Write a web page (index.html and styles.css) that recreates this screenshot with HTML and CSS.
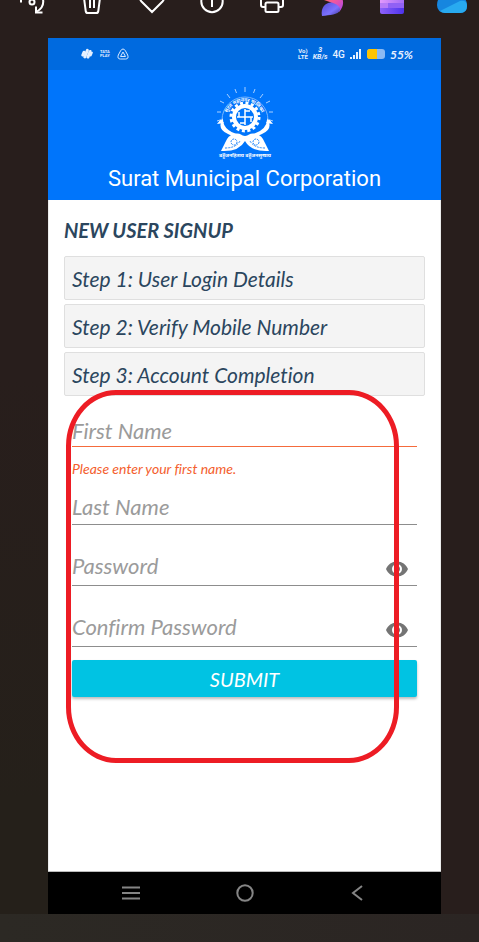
FILE: index.html
```
<!DOCTYPE html>
<html lang="en">
<head>
<meta charset="utf-8">
<meta name="viewport" content="width=device-width, initial-scale=1">
<title>Surat Municipal Corporation</title>
<link rel="stylesheet" href="styles.css">
</head>
<body>
<div class="viewer">
  <nav class="toolbar" aria-label="Image tools">
    <button class="tool" type="button" aria-label="Rotate"><svg width="32" height="32" viewBox="0 0 32 32"><path d="M5 10v8.500M26 12q4 10-5 15.500"/><circle cx="16" cy="18" r="2.500"/><path d="M20 22.500V28.500h6.500"/></svg></button>
    <button class="tool" type="button" aria-label="Delete"><svg width="32" height="32" viewBox="0 0 32 32"><path d="M6 10h20M7.500 10l2.200 17q.3 2 2 2h8.600q1.700 0 2-2l2.200-17M14 14v10M18 14v10"/></svg></button>
    <button class="tool" type="button" aria-label="Favourite"><svg width="32" height="32" viewBox="0 0 32 32"><path d="M16 28L5.500 17.500C0 11 9 5 16 12c7-7 16-1 10.500 5.500z"/></svg></button>
    <button class="tool" type="button" aria-label="Info"><svg width="32" height="32" viewBox="0 0 32 32"><circle cx="16" cy="17.500" r="10.700"/><path d="M16 15v8M16 11v1"/></svg></button>
    <button class="tool" type="button" aria-label="Print"><svg width="32" height="32" viewBox="0 0 32 32"><path d="M9 23H7q-2 0-2-2v-9h22v9q0 2-2 2h-2"/><rect x="9.500" y="18.500" width="13" height="9.500" rx="1.500"/></svg></button>
    <button class="tool" type="button" aria-label="Designer"><svg class="filled" width="32" height="32" viewBox="0 0 32 32"><defs><linearGradient id="pink" x2="1" y2="1"><stop stop-color="#ff7b55"/><stop offset=".5" stop-color="#f2579c"/><stop offset="1" stop-color="#a344f5"/></linearGradient><linearGradient id="violet" x2="1" y2="1"><stop stop-color="#554bd4"/><stop offset=".6" stop-color="#7c72ff"/><stop offset="1" stop-color="#3f3794"/></linearGradient></defs><path fill="url(#pink)" d="M8 12q8-8 17 0 5 8-2 16-2-9-15-12z"/><path fill="url(#violet)" d="M6 32c-2-10 6-15 11-13 3 1 8 4 7 7-2 5-10 5-18 6z"/></svg></button>
    <button class="tool" type="button" aria-label="Clipchamp"><svg class="filled" width="32" height="32" viewBox="0 0 32 32"><defs><linearGradient id="film" x2="1"><stop stop-color="#e299fc"/><stop offset="1" stop-color="#a26bf5"/></linearGradient><linearGradient id="base" x2="1"><stop stop-color="#8f62fa"/><stop offset="1" stop-color="#4d33ec"/></linearGradient></defs><path fill="url(#film)" d="M4 6h24v13H4z"/><path fill="#b77bf7" d="M4 19h8v6H4z"/><path fill="#9061f5" d="M12 19h16v6H12z"/><path fill="url(#base)" d="M4 24h24v4q0 2-2 2H6q-2 0-2-2z"/></svg></button>
    <button class="tool" type="button" aria-label="OneDrive"><svg class="filled" width="32" height="32" viewBox="0 0 32 32"><path fill="#1686df" d="M9 29q-8-1-8-8 0-9 9-9l13 2q8-1 8 7 0 8-7 8z"/><path fill="#28aaf0" d="m4 27 20-10q7-1 7 5 0 7-7 7H9q-3 0-5-2z"/></svg></button>
  </nav>

  <main class="phone">
    <div class="status">
      <div class="status-group left">
        <svg width="12" height="12" viewBox="0 0 12 12"><g fill="#e7f1ff" transform="rotate(22 6 6)"><rect x="1" y="4" width="3" height="6" rx="1.500"/><rect x="3.500" y="1" width="3" height="10" rx="1.500"/><rect x="6.500" y="1" width="3" height="9" rx="1.500"/><rect x="9" y="2" width="2" height="5" rx="1"/></g></svg>
        <span class="stack tiny">TATA<br>PLAY</span>
        <svg width="12" height="12" viewBox="0 0 12 12" fill="none" stroke="#d5e7ff"><path d="M6 1Q7.500 1 8.500 3l2.200 4q1.300 4-2 4H3.300q-3.300 0-2-4l2.200-4Q4.500 1 6 1z"/><path d="M6 4 3.500 8.500h5z"/></svg>
      </div>
      <div class="status-group">
        <span class="stack small">Vo)<br>LTE</span>
        <span class="stack speed">3<br>KB/s</span>
        <span class="network">4G</span>
        <svg width="12" height="12" viewBox="0 0 12 12" fill="#e7f1ff"><path d="M0 9h2v2H0zM3 7h2v4H3zM6 4h2v7H6zM9 1h2v10H9z"/></svg>
        <svg width="18" height="10" viewBox="0 0 18 10"><rect width="18" height="10" rx="3" fill="#8ab9f3"/><path d="M10 0H3Q0 0 0 3v4q0 3 3 3h7z" fill="#ffc400"/></svg>
        <span class="percent">55%</span>
      </div>
    </div>

    <header class="brand">
      <svg class="emblem" width="58" height="74" viewBox="0 0 58 74" role="img" aria-label="Surat Municipal Corporation emblem">
        <defs><path id="arc" d="M10 34a18.500 18.500 0 0 1 37 0"/></defs>
        <g stroke="#a9d0ff" stroke-width="1"><path d="M29 1v5M19 3l1.500 4M39 3l-1.500 4M11 8l3 4M47 8l-3 4M4 15l4 2M54 15l-4 2M1 26h4M57 26h-4M1 35l3-1M57 35l-3-1"/></g>
        <path d="M6 34a23 23 0 0 1 46 0" fill="none" stroke="#79b6ff" stroke-width="1"/>
        <circle cx="29" cy="31" r="14" fill="none" stroke="#fff" stroke-width="3" stroke-dasharray="3 2.500"/>
        <circle cx="29" cy="31" r="11" fill="none" stroke="#fff" stroke-width="4"/>
        <path d="M29 23v16M21 31h16M29 25h5M35 31v5M29 37h-5M23 31v-5" fill="none" stroke="#fff" stroke-width="1.500"/>
        <text class="arc-text"><textPath href="#arc" startOffset="50%" text-anchor="middle">सुरत महानगर पालिका</textPath></text>
        <path d="M7 32q-1 14 22 18Q52 46 51 32q7 11-5 16-7 4-17 5-10-1-17-5Q0 43 7 32z" fill="#fff"/>
        <path d="M8 37 1 38l4-5M50 37l7 1-4-5" fill="#fff"/>
        <path d="M29 53q-4-7-11-5-6 1-9 9l-4 8q18 1 24-10 6 11 24 10l-4-8q-3-8-9-9-7-2-11 5z" fill="#fff"/>
        <g fill="none" stroke="#2588fa" stroke-width="1" stroke-dasharray="2 1"><ellipse cx="18" cy="56" rx="3" ry="3"/><ellipse cx="40" cy="56" rx="3" ry="3"/><path d="M9 62q11 0 15-7M49 62q-11 0-15-7"/></g>
        <text class="motto" x="29" y="71" text-anchor="middle">बहुजनहिताय बहुजनसुखाय</text>
      </svg>
      <div class="brand-name">Surat Municipal Corporation</div>
    </header>

    <section class="content">
      <h1>NEW USER SIGNUP</h1>
      <ol class="steps">
        <li>Step 1: User Login Details</li>
        <li>Step 2: Verify Mobile Number</li>
        <li>Step 3: Account Completion</li>
      </ol>
      <form class="form">
        <div class="field invalid"><input type="text" aria-label="First Name" aria-describedby="first-error" placeholder="First Name"></div>
        <p class="error" id="first-error">Please enter your first name.</p>
        <div class="field"><input type="text" aria-label="Last Name" placeholder="Last Name"></div>
        <div class="field secret">
          <input type="password" aria-label="Password" placeholder="Password">
          <button class="eye" type="button" aria-label="Show password"><svg width="24" height="24" viewBox="0 0 24 24"><path d="M12 4.500C7 4.500 2.730 7.610 1 12c1.730 4.390 6 7.500 11 7.500s9.270-3.110 11-7.500c-1.730-4.390-6-7.500-11-7.500zM12 17a5 5 0 1 1 0-10 5 5 0 0 1 0 10zm0-8a3 3 0 1 0 0 6 3 3 0 0 0 0-6z"/></svg></button>
        </div>
        <div class="field secret">
          <input type="password" aria-label="Confirm Password" placeholder="Confirm Password">
          <button class="eye" type="button" aria-label="Show confirmed password"><svg width="24" height="24" viewBox="0 0 24 24"><path d="M12 4.500C7 4.500 2.730 7.610 1 12c1.730 4.390 6 7.500 11 7.500s9.270-3.110 11-7.500c-1.730-4.390-6-7.500-11-7.500zM12 17a5 5 0 1 1 0-10 5 5 0 0 1 0 10zm0-8a3 3 0 1 0 0 6 3 3 0 0 0 0-6z"/></svg></button>
        </div>
        <button class="submit" type="submit">SUBMIT</button>
      </form>
      <div class="marker" aria-hidden="true"></div>
    </section>

    <nav class="system" aria-label="System navigation">
      <button type="button" aria-label="Recent apps"><svg width="20" height="20" viewBox="0 0 20 20"><path d="M1 4.500h18M1 10h18M1 15.500h18"/></svg></button>
      <button type="button" aria-label="Home"><svg width="20" height="20" viewBox="0 0 20 20"><circle cx="10" cy="10" r="7.700"/></svg></button>
      <button type="button" aria-label="Back"><svg width="20" height="20" viewBox="0 0 20 20"><path d="m14 3-9 7 9 7"/></svg></button>
    </nav>
  </main>
  <footer class="viewer-foot"></footer>
</div>
</body>
</html>
```
FILE: styles.css
```
* { box-sizing: border-box; }
body {
  margin: 0;
  background: #281e1c;
  font-family: Lato, "Open Sans", sans-serif;
  font-variant-ligatures: none;
}
button { border: 0; padding: 0; background: none; font: inherit; }
svg { display: block; }

.viewer {
  min-height: 100vh;
  display: flex;
  flex-direction: column;
  background: linear-gradient(to right, transparent 48px, #281e1c 48px), linear-gradient(#281e1c 40%, #25201a 85%);
}
.toolbar {
  height: 38px;
  padding-left: 2px;
  display: grid;
  grid-template-columns: repeat(8, 60px);
  grid-template-rows: 38px;
  align-items: end;
  overflow: hidden;
  background: #281e1c;
}
.tool { height: 54px; display: flex; justify-content: center; align-items: flex-start; }
.tool svg { fill: none; stroke: #fff; stroke-width: 2; }
.tool svg.filled { stroke: none; }

.phone {
  flex: 1;
  margin: 0 38px 0 48px;
  display: flex;
  flex-direction: column;
  background: #fff;
}
.status {
  height: 32px;
  padding: 0 28px 0 33px;
  display: flex;
  justify-content: space-between;
  align-items: center;
  background: #006adf;
  color: #e7f1ff;
  font-family: Roboto, sans-serif;
}
.status-group { display: flex; align-items: center; gap: 5px; }
.status-group.left { gap: 7px; }
.stack { font-weight: 700; text-align: center; }
.tiny { font-size: 4px; line-height: 4px; }
.small { font-size: 6px; line-height: 6px; }
.speed { font-size: 7px; line-height: 7px; font-style: italic; }
.network { font-size: 10px; font-weight: 500; }
.percent { font: italic 700 12px Lato, sans-serif; }

.brand {
  height: 130px;
  padding-top: 16px;
  display: flex;
  flex-direction: column;
  align-items: center;
  background: #0075fb;
  color: #fff;
}
.arc-text, .motto { font-family: "Noto Sans", sans-serif; font-size: 5px; font-weight: 700; fill: #fff; }
.brand-name { margin-top: 3px; font: 400 22px/32px Roboto, sans-serif; }

.content {
  position: relative;
  flex: 1;
  padding: 14px 15px 0;
  border: solid #ececec;
  border-width: 0 1px;
}
h1 { margin: 0; color: #2b465e; font-size: 20px; font-style: italic; font-weight: 700; line-height: 32px; }
.steps {
  margin: 10px 0 20px;
  padding: 0;
  display: grid;
  gap: 4px;
  list-style: none;
}
.steps li {
  height: 44px;
  padding: 0 7px;
  border: 1px solid #dfdfdf;
  border-radius: 2px;
  background: #f4f4f4;
  color: #2b465e;
  font-size: 21px;
  font-style: italic;
  line-height: 44px;
}
.form { padding: 0 8px; display: flex; flex-direction: column; }
.field { height: 34px; display: flex; border-bottom: 1px solid #8d8d8d; }
.field.invalid { height: 31px; border-color: #f56b3c; }
.field input {
  flex: 1;
  min-width: 0;
  padding: 0 0 2px;
  border: 0;
  outline: 0;
  background: none;
  color: #2b465e;
  font: italic 22px Lato, sans-serif;
  font-variant-ligatures: none;
}
.field input::placeholder { color: #9b9b9b; opacity: 1; }
.field.secret { height: 61px; padding: 22px 8px 0 0; }
.eye { display: flex; align-items: center; padding-top: 6px; }
.eye svg { fill: #747474; }
.error { margin: 0; color: #f4602e; font-size: 14px; font-style: italic; line-height: 44px; }
.submit {
  height: 37px;
  margin-top: 13px;
  border-radius: 2px;
  background: #00c3e3;
  box-shadow: 0 2px 3px #0004;
  color: #fff;
  font-size: 20px;
  font-style: italic;
}
.marker {
  position: absolute;
  top: 190px;
  left: 17px;
  right: 41px;
  height: 373px;
  border: 5px solid #ed1c24;
  border-radius: 50px / 56px;
  pointer-events: none;
}
.system {
  height: 43px;
  padding: 0 73px;
  display: flex;
  justify-content: space-between;
  align-items: center;
  border-top: 1px solid #bbb;
  background: #000;
}
.system svg { fill: none; stroke: #858585; stroke-width: 2; }
.viewer-foot { height: 28px; background: linear-gradient(to right, #2c2924, #2b2523); }
```
